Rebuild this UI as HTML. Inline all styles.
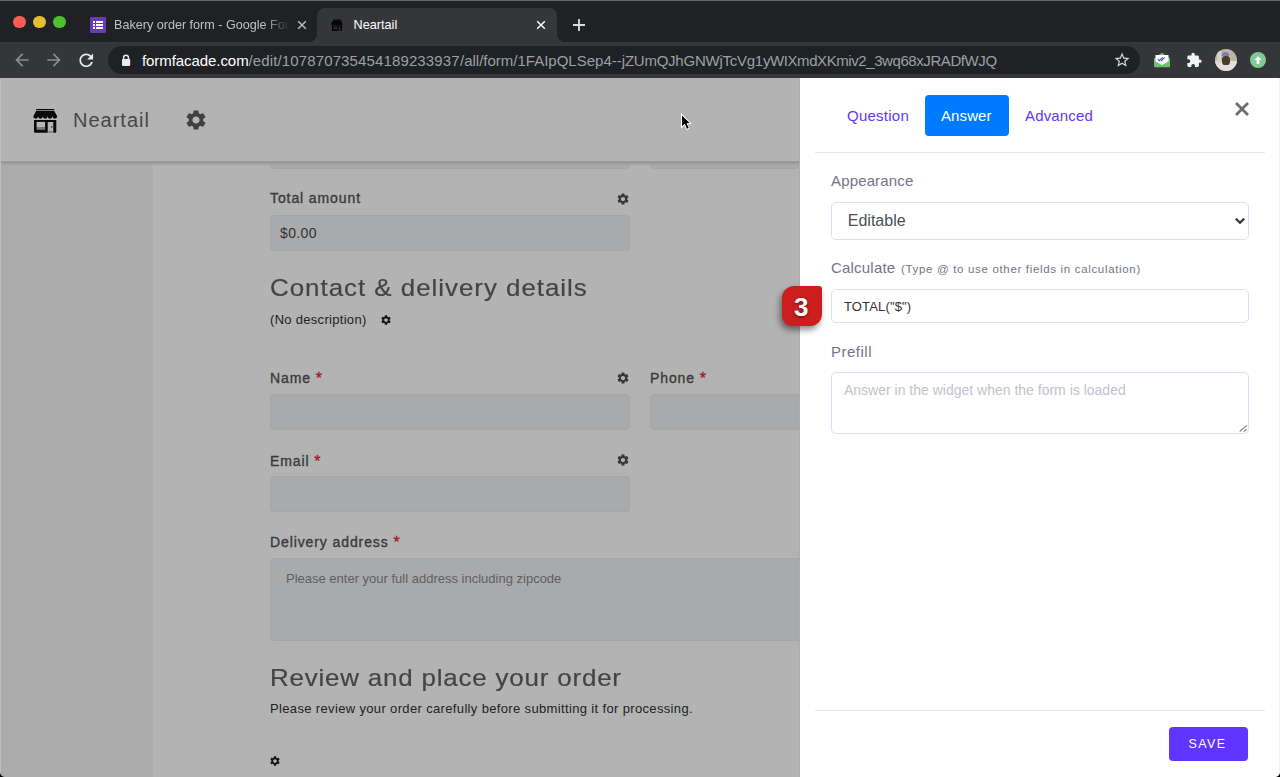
<!DOCTYPE html>
<html><head><meta charset="utf-8">
<style>
*{box-sizing:border-box;margin:0;padding:0}
html,body{width:1280px;height:777px;overflow:hidden;background:#202124;font-family:"Liberation Sans",sans-serif;position:relative}
.a{position:absolute}
.t{position:absolute;white-space:nowrap;line-height:1}
.fld{position:absolute;background:#a9aaac;border-radius:4px;border:1px solid #a5a6a8}
.lbl{position:absolute;white-space:nowrap;line-height:1;font-size:14px;color:#3a3a3a;letter-spacing:0.9px;-webkit-text-stroke:0.35px #3a3a3a}
.star{color:#a8141c;-webkit-text-stroke:0.3px #a8141c;font-size:16px;margin-left:0px;position:relative;top:1.5px}
</style></head><body>
<svg width="0" height="0" style="position:absolute"><defs><path id="gear" d="M19.14 12.94c.04-.3.06-.61.06-.94 0-.32-.02-.64-.07-.94l2.03-1.58c.18-.14.23-.41.12-.61l-1.92-3.32c-.12-.22-.37-.29-.59-.22l-2.39.96c-.5-.38-1.03-.7-1.62-.94l-.36-2.54c-.04-.24-.24-.41-.48-.41h-3.84c-.24 0-.43.17-.47.41l-.36 2.54c-.59.24-1.13.57-1.62.94l-2.39-.96c-.22-.08-.47 0-.59.22L2.74 8.87c-.12.21-.08.47.12.61l2.03 1.58c-.05.3-.09.63-.09.94s.02.64.07.94l-2.03 1.58c-.18.14-.23.41-.12.61l1.92 3.32c.12.22.37.29.59.22l2.39-.96c.5.38 1.03.7 1.62.94l.36 2.54c.05.24.24.41.48.41h3.84c.24 0 .44-.17.47-.41l.36-2.54c.59-.24 1.13-.56 1.62-.94l2.39.96c.22.08.47 0 .59-.22l1.92-3.32c.12-.22.07-.47-.12-.61l-2.01-1.58zM12 15.6c-1.98 0-3.6-1.62-3.6-3.6s1.62-3.6 3.6-3.6 3.6 1.62 3.6 3.6-1.62 3.6-3.6 3.6z"/></defs></svg>
<!-- ============ TAB STRIP ============ -->
<div class="a" style="left:0;top:0;width:1280px;height:42px;background:#202124"></div>
<div class="a" style="left:0;top:0;width:1280px;height:1px;background:#67676a"></div>
<div class="a" style="left:13px;top:15.5px;width:12.5px;height:12.5px;border-radius:50%;background:#fd5b56"></div>
<div class="a" style="left:33px;top:15.5px;width:12.5px;height:12.5px;border-radius:50%;background:#e6bd2c"></div>
<div class="a" style="left:53px;top:15.5px;width:12.5px;height:12.5px;border-radius:50%;background:#50c02f"></div>
<!-- inactive tab -->
<svg class="a" style="left:90px;top:17px" width="16" height="16" viewBox="0 0 16 16">
<rect width="16" height="16" rx="1" fill="#673ab7"/>
<rect x="3" y="4" width="2" height="2" fill="#fff"/><rect x="6" y="4" width="7" height="2" fill="#fff"/>
<rect x="3" y="7" width="2" height="2" fill="#fff"/><rect x="6" y="7" width="7" height="2" fill="#fff"/>
<rect x="3" y="10" width="2" height="2" fill="#fff"/><rect x="6" y="10" width="7" height="2" fill="#fff"/>
</svg>
<div class="t" style="left:114px;top:19.4px;font-size:12.6px;color:#bdc1c6;width:176px;overflow:hidden;-webkit-mask-image:linear-gradient(90deg,#000 150px,transparent 176px)">Bakery order form - Google Forms</div>
<svg class="a" style="left:297px;top:20px" width="10" height="10" viewBox="0 0 10 10"><path d="M1.2 1.2L8.8 8.8M8.8 1.2L1.2 8.8" stroke="#bdc1c6" stroke-width="1.4"/></svg>
<!-- active tab -->
<div class="a" style="left:317px;top:8px;width:240px;height:34px;background:#35363a;border-radius:8px 8px 0 0"></div>
<div class="a" style="left:309px;top:34px;width:8px;height:8px;background:radial-gradient(circle at 0 0,#202124 7.5px,#35363a 8.5px)"></div>
<div class="a" style="left:557px;top:34px;width:8px;height:8px;background:radial-gradient(circle at 100% 0,#202124 7.5px,#35363a 8.5px)"></div>
<svg class="a" style="left:331px;top:19px" width="12" height="12" viewBox="0 0 24 24">
<path d="M4 1h16v2H4z M3.5 3.5h17L23 10.5a2.3 2.3 0 0 1-4.6 0a2.3 2.3 0 0 1-4.6 0a2.3 2.3 0 0 1-4.6 0a2.3 2.3 0 0 1-4.6 0a2.3 2.3 0 0 1-4.6 0z M2 13h20v9.5a1.5 1.5 0 0 1-1.5 1.5h-17A1.5 1.5 0 0 1 2 22.5z" fill="#050505"/>
<rect x="5" y="15" width="8" height="6" fill="#2a2a2c"/><rect x="15" y="15" width="4" height="9" fill="#2a2a2c"/>
</svg>
<div class="t" style="left:353.5px;top:19.3px;font-size:12.7px;color:#fff">Neartail</div>
<svg class="a" style="left:536px;top:20px" width="10" height="10" viewBox="0 0 10 10"><path d="M1.2 1.2L8.8 8.8M8.8 1.2L1.2 8.8" stroke="#fff" stroke-width="1.4"/></svg>
<svg class="a" style="left:572px;top:18px" width="14" height="14" viewBox="0 0 14 14"><path d="M7 1V13M1 7H13" stroke="#dadce0" stroke-width="1.8"/></svg>

<!-- ============ TOOLBAR ============ -->
<div class="a" style="left:0;top:42px;width:1280px;height:36px;background:#35363a"></div>
<svg class="a" style="left:12.2px;top:50.2px" width="20" height="20" viewBox="0 0 24 24"><path d="M20 11H7.83l5.59-5.59L12 4l-8 8 8 8 1.41-1.41L7.83 13H20v-2z" fill="#8b8c8f"/></svg>
<svg class="a" style="left:44.4px;top:50.2px" width="20" height="20" viewBox="0 0 24 24"><path d="M4 11h12.17l-5.59-5.59L12 4l8 8-8 8-1.41-1.41L16.17 13H4v-2z" fill="#8b8c8f"/></svg>
<svg class="a" style="left:76.2px;top:50.2px" width="20.5" height="20.5" viewBox="0 0 24 24"><path d="M17.65 6.35C16.2 4.9 14.21 4 12 4c-4.42 0-7.99 3.58-7.99 8s3.57 8 7.99 8c3.73 0 6.84-2.55 7.73-6h-2.08c-.82 2.330-3.04 4-5.65 4-3.31 0-6-2.69-6-6s2.69-6 6-6c1.66 0 3.140.69 4.220 1.78L13 11h7V4l-2.35 2.35z" fill="#e8eaed"/></svg>
<div class="a" style="left:108px;top:46px;width:1032px;height:28px;border-radius:14px;background:#202124"></div>
<svg class="a" style="left:121px;top:54px" width="10" height="12" viewBox="0 0 10 12"><path d="M2.6 5.2V3.6a2.4 2.4 0 0 1 4.8 0v1.6" stroke="#e8eaed" stroke-width="1.5" fill="none"/><rect x="1" y="5" width="8.2" height="6.9" rx="0.8" fill="#e8eaed"/></svg>
<div class="t" style="left:142px;top:52.5px;font-size:15px;color:#fff;letter-spacing:-0.07px">formfacade.com</div>
<div class="t" style="left:248.5px;top:52.5px;font-size:15px;color:#9aa0a6;letter-spacing:0.13px">/edit/107870735454189233937</div>
<div class="t" style="left:460px;top:52.5px;font-size:15px;color:#9aa0a6">/all/form/1FAIpQLSep4--</div>
<div class="t" style="left:621.8px;top:52.5px;font-size:15px;color:#9aa0a6;letter-spacing:-0.24px">jZUmQJhGNWjTcVg1y</div>
<div class="t" style="left:770px;top:52.5px;font-size:15px;color:#9aa0a6;letter-spacing:-0.42px">WIXmdXKmiv2_3wq68xJRADfWJQ</div>
<svg class="a" style="left:1112.7px;top:51.1px" width="18.1" height="18.1" viewBox="0 0 24 24"><path d="M22 9.24l-7.19-.62L12 2 9.19 8.63 2 9.24l5.46 4.73L5.82 21 12 17.27 18.18 21l-1.63-7.03L22 9.24zM12 15.4l-3.76 2.27 1-4.28-3.32-2.88 4.38-.38L12 6.1l1.71 4.04 4.38.38-3.32 2.88 1 4.28L12 15.4z" fill="#d5d6d8"/></svg>
<!-- ext envelope -->
<svg class="a" style="left:1153px;top:52px" width="18" height="16" viewBox="0 0 18 16">
<path d="M1 6.5L9 0.8L17 6.5V14a1.2 1.2 0 0 1-1.2 1.2H2.2A1.2 1.2 0 0 1 1 14z" fill="#6cc36f"/>
<path d="M2.5 3H15.5V9.5L9 13L2.5 9.5z" fill="#fff"/>
<path d="M4.8 7.2l1.6 1.4 3.2-3.2M8 8.2l0.6 0.4 3.2-3.2" stroke="#5b4fdc" stroke-width="1.2" fill="none"/>
</svg>
<svg class="a" style="left:1185.5px;top:52.2px" width="16.3" height="16.3" viewBox="0 0 24 24"><path d="M20.5 11H19V7c0-1.1-.9-2-2-2h-4V3.5C13 2.12 11.88 1 10.5 1S8 2.12 8 3.5V5H4c-1.1 0-1.99.9-1.99 2v3.8H3.5c1.49 0 2.7 1.21 2.7 2.7s-1.21 2.7-2.7 2.7H2V20c0 1.1.9 2 2 2h3.8v-1.5c0-1.49 1.21-2.7 2.7-2.7 1.49 0 2.7 1.21 2.7 2.7V22H17c1.1 0 2-.9 2-2v-4h1.5c1.38 0 2.5-1.12 2.5-2.5S21.880 11 20.500 11z" fill="#f1f3f4"/></svg>
<!-- avatar -->
<div class="a" style="left:1215px;top:49px;width:22px;height:22px;border-radius:50%;overflow:hidden;background:#bfb5a6">
  <div class="a" style="left:0;top:12px;width:22px;height:10px;background:#e2e0dc"></div>
  <div class="a" style="left:7px;top:7px;width:8px;height:9px;border-radius:40%;background:#4a3a30"></div>
  <div class="a" style="left:7px;top:3px;width:7px;height:4px;border-radius:3px 3px 0 0;background:#6f83b8"></div>
  <div class="a" style="left:2px;top:2px;width:4px;height:12px;background:#d8d3ca"></div>
</div>
<div class="a" style="left:1250px;top:52px;width:16px;height:16px;border-radius:50%;background:#81c995"></div>
<svg class="a" style="left:1254px;top:56px" width="8" height="8" viewBox="0 0 8 8"><path d="M4 0.3L7.6 4H5.4V7.8H2.6V4H0.4z" fill="#fff"/></svg>

<!-- ============ PAGE ============ -->
<div class="a" style="left:0;top:78px;width:800px;height:699px;background:#b3b3b3"></div>
<!-- sidebar -->
<div class="a" style="left:0;top:162px;width:153px;height:615px;background:#acacac"></div>
<!-- peeking fields under header -->
<div class="fld" style="left:270px;top:150px;width:360px;height:19px"></div>
<div class="fld" style="left:650px;top:150px;width:150px;height:19px"></div>
<!-- header -->
<div class="a" style="left:0;top:78px;width:800px;height:83px;background:#b3b3b3"></div>
<div class="a" style="left:0;top:161px;width:800px;height:5px;background:linear-gradient(#a0a0a0,#959595 30%,#a3a3a3 55%,rgba(150,150,150,0.25) 80%,rgba(150,150,150,0))"></div>
<svg class="a" style="left:33px;top:108px" width="25" height="26" viewBox="0 0 25 26">
<rect x="3.1" y="1" width="18.1" height="1.3" fill="#0a0a0a"/>
<path d="M3.1 2.9H21.2L24.2 8.3v0a2.39 2.39 0 0 1 -4.78 0a2.39 2.39 0 0 1 -4.78 0a2.39 2.39 0 0 1 -4.78 0a2.39 2.39 0 0 1 -4.78 0a2.39 2.39 0 0 1 -4.78 0z" fill="#0a0a0a"/>
<path d="M1 12H23.3V23.6a1.2 1.2 0 0 1 -1.2 1.2H2.2A1.2 1.2 0 0 1 1 23.6z" fill="#0a0a0a"/>
<rect x="3.6" y="13.9" width="8.5" height="5.1" fill="#b8b8b8"/><rect x="3.6" y="19" width="8.5" height="2.8" fill="#7c7c7c"/>
<rect x="14.7" y="14" width="5.55" height="10.8" fill="#b3b3b3"/><rect x="18.2" y="18.4" width="1.3" height="1.1" fill="#0a0a0a"/><rect x="15.4" y="23.2" width="4" height="1.1" fill="#6a6a6a"/>
</svg>
<svg class="a" style="left:184.3px;top:108px" width="24" height="24" viewBox="0 0 24 24"><use href="#gear" fill="#404040"/></svg>
<div class="t" style="left:73px;top:109.5px;font-size:20px;color:#474747;letter-spacing:1px">Neartail</div>

<!-- form content -->
<div class="lbl" style="left:270px;top:190.5px">Total amount</div>
<svg class="a" style="left:615.6px;top:191.8px" width="14" height="14" viewBox="0 0 24 24"><use href="#gear" fill="#383838"/></svg>
<div class="fld" style="left:270px;top:215px;width:360px;height:36px"></div>
<div class="t" style="left:280px;top:226px;font-size:14px;color:#333;letter-spacing:0.35px">$0.00</div>

<div class="t" style="left:270px;top:276px;font-size:24px;color:#444;letter-spacing:0.9px;transform:scaleX(1.08);transform-origin:0 0;-webkit-text-stroke:0.2px #444">Contact &amp; delivery details</div>
<div class="t" style="left:270px;top:313px;font-size:13px;color:#222;letter-spacing:0.3px">(No description)</div>

<svg class="a" style="left:380.4px;top:314.3px" width="12" height="12" viewBox="0 0 24 24"><use href="#gear" fill="#151515"/></svg>
<div class="lbl" style="left:270px;top:369.5px">Name <span class="star">*</span></div>
<div class="fld" style="left:270px;top:394px;width:360px;height:36px"></div>
<svg class="a" style="left:615.6px;top:370.8px" width="14" height="14" viewBox="0 0 24 24"><use href="#gear" fill="#383838"/></svg>
<div class="lbl" style="left:650px;top:369.5px">Phone <span class="star">*</span></div>
<div class="fld" style="left:650px;top:394px;width:150px;height:36px"></div>

<div class="lbl" style="left:270px;top:452.5px">Email <span class="star">*</span></div>
<div class="fld" style="left:270px;top:476px;width:360px;height:36px"></div>

<svg class="a" style="left:615.6px;top:452.8px" width="14" height="14" viewBox="0 0 24 24"><use href="#gear" fill="#383838"/></svg>
<div class="lbl" style="left:270px;top:533.5px">Delivery address <span class="star">*</span></div>
<div class="fld" style="left:270px;top:558px;width:540px;height:83px"></div>
<div class="t" style="left:286px;top:572px;font-size:13px;color:#5f5f5f">Please enter your full address including zipcode</div>

<div class="t" style="left:270px;top:666px;font-size:24px;color:#444;letter-spacing:0.75px;transform:scaleX(1.08);transform-origin:0 0;-webkit-text-stroke:0.2px #444">Review and place your order</div>
<div class="t" style="left:270px;top:702px;font-size:13px;color:#222;letter-spacing:0.35px">Please review your order carefully before submitting it for processing.</div>

<svg class="a" style="left:269.4px;top:754.5px" width="12" height="12" viewBox="0 0 24 24"><use href="#gear" fill="#151515"/></svg>
<!-- ============ RIGHT PANEL ============ -->
<div class="a" style="left:800px;top:78px;width:480px;height:699px;background:#fff"></div>
<div class="a" style="left:799px;top:78px;width:1px;height:699px;background:#adadad"></div>
<div class="t" style="left:847px;top:108px;font-size:15px;color:#6236ff;letter-spacing:0.25px">Question</div>
<div class="a" style="left:925px;top:95px;width:84px;height:41px;background:#007bff;border-radius:4px"></div>
<div class="t" style="left:941px;top:108px;font-size:15px;color:#fff;letter-spacing:0.1px">Answer</div>
<div class="t" style="left:1025px;top:108px;font-size:15px;color:#6236ff;letter-spacing:0.15px">Advanced</div>
<svg class="a" style="left:1235px;top:102px" width="14" height="14" viewBox="0 0 14 14"><path d="M2 2L12 12M12 2L2 12" stroke="#6e6e6e" stroke-width="2.8" stroke-linecap="square"/></svg>
<div class="a" style="left:815px;top:152px;width:450px;height:1px;background:#e3e6ea"></div>

<div class="t" style="left:831px;top:172.8px;font-size:15px;color:#75738a;letter-spacing:0.15px">Appearance</div>
<div class="a" style="left:831px;top:202px;width:418px;height:38px;border:1px solid #e0ddf6;border-radius:5px"></div>
<div class="t" style="left:847.8px;top:212.5px;font-size:16px;color:#495057">Editable</div>
<svg class="a" style="left:1234px;top:216px" width="12" height="10" viewBox="0 0 12 10"><path d="M1.8 2.6L6 6.8L10.2 2.6" stroke="#343a40" stroke-width="2.2" fill="none"/></svg>

<div class="t" style="left:831px;top:260px;font-size:15px;color:#75738a;letter-spacing:0.2px">Calculate</div>
<div class="t" style="left:901px;top:263.7px;font-size:11.5px;color:#75738a;letter-spacing:0.67px">(Type @ to use other fields in calculation)</div>
<div class="a" style="left:831px;top:289px;width:418px;height:34px;border:1px solid #e0ddf6;border-radius:5px"></div>
<div class="t" style="left:844px;top:299.5px;font-size:13px;color:#333;letter-spacing:0.15px">TOTAL("$")</div>

<div class="t" style="left:831px;top:344px;font-size:15px;color:#75738a;letter-spacing:0.5px">Prefill</div>
<div class="a" style="left:831px;top:372px;width:418px;height:62px;border:1px solid #e0ddf6;border-radius:5px"></div>
<div class="t" style="left:844px;top:383px;font-size:14px;color:#c3c2cc">Answer in the widget when the form is loaded</div>

<div class="a" style="left:815px;top:710px;width:450px;height:1px;background:#e3e6ea"></div>
<div class="a" style="left:1169px;top:727px;width:79px;height:34px;background:#5f35ff;border-radius:4px"></div>
<div class="t" style="left:1188.5px;top:737.5px;font-size:12.5px;color:#fff;letter-spacing:1.4px">SAVE</div>

<!-- badge -->
<div class="a" style="left:782px;top:286px;width:40px;height:40px;background:#cd1e1e;border-radius:12px 3px 12px 10px;box-shadow:-2px 4px 6px rgba(0,0,0,0.45)"></div>
<div class="t" style="left:794px;top:294px;font-size:26px;font-weight:bold;color:#fff;text-shadow:0 1px 3px rgba(0,0,0,0.5)">3</div>
<!-- textarea resize handle -->
<svg class="a" style="left:1236px;top:422px" width="14" height="14" viewBox="0 0 14 14"><path d="M3.7 9.6L10.6 3.3M7.6 9.6L10.6 7.2" stroke="#7a7a7a" stroke-width="1.1"/></svg>
<!-- cursor -->
<svg class="a" style="left:681px;top:113px" width="12" height="18" viewBox="0 0 12 18">
<path d="M0 0L0 15.6L3.5 12.4L5.8 17L8.7 15.7L6.5 11.3L10.9 11.1Z" fill="#fff"/>
<path d="M1 2.4L1 13.3L3.8 10.7L6 15.7L7.7 15L5.5 10.2L8.6 10.1Z" fill="#000"/>
</svg>
<!-- window edges -->
<div class="a" style="left:0;top:78px;width:1px;height:699px;background:#bdbdbd"></div>
<div class="a" style="left:1279px;top:78px;width:1px;height:699px;background:#f2f2f2"></div>
<div class="a" style="left:0;top:772px;width:5px;height:5px;background:radial-gradient(circle at 100% 0,transparent 4.5px,#000 5.5px)"></div>
<div class="a" style="left:1275px;top:772px;width:5px;height:5px;background:radial-gradient(circle at 0 0,transparent 4.5px,#000 5.5px)"></div>
</body></html>
